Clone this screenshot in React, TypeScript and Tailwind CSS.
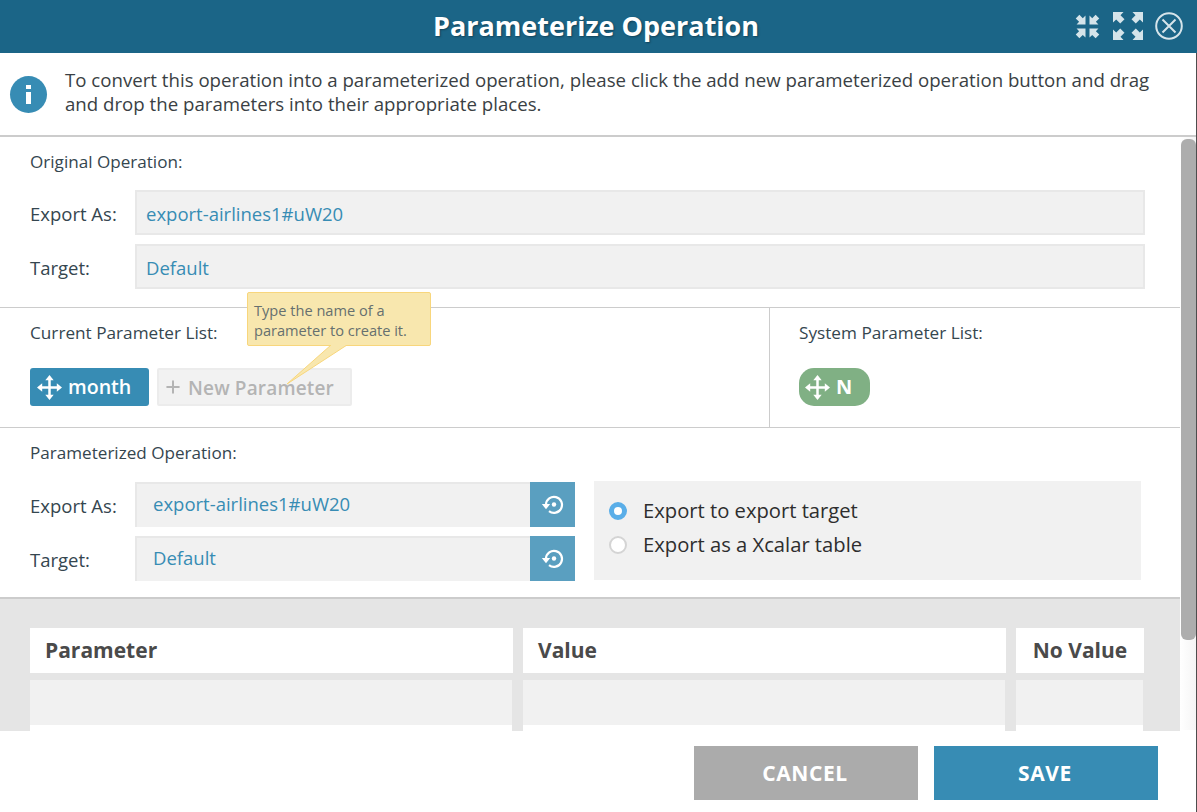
import * as React from "react";
import { Plus } from "lucide-react";

const ARROW = "M0 0h10.5L7.5 3.2l4 4-4.3 4.3-4-4L0 10.5z";

function HeaderIcons() {
  return (
    <div className="absolute left-[1075px] top-[12px] flex items-center text-[#d5e4ea]">
      {/* collapse */}
      <svg width="25" height="25" viewBox="0 0 25 25" fill="currentColor">
        <path d={ARROW} transform="translate(10.5 10.5) rotate(180) scale(0.85)" />
        <path d={ARROW} transform="translate(14.5 10.5) scale(1 -1) scale(0.85)" />
        <path d={ARROW} transform="translate(10.5 14.5) scale(-1 1) scale(0.85)" />
        <path d={ARROW} transform="translate(14.5 14.5) scale(0.85)" />
      </svg>
      {/* expand */}
      <svg className="ml-[13px]" width="30" height="28" viewBox="0 0 30 28" fill="currentColor">
        <path d={ARROW} />
        <path d={ARROW} transform="translate(30 0) scale(-1 1)" />
        <path d={ARROW} transform="translate(0 28) scale(1 -1)" />
        <path d={ARROW} transform="translate(30 28) scale(-1 -1)" />
      </svg>
      <svg className="ml-[12px]" width="28" height="28" viewBox="0 0 28 28" fill="none" stroke="currentColor" strokeWidth="2">
        <circle cx="14" cy="14" r="12.8" />
        <path d="M7.5 7.5l13 13M20.5 7.5l-13 13" />
      </svg>
    </div>
  );
}

function MoveIcon({ size }: { size: number }) {
  return (
    <svg width={size} height={size} viewBox="0 0 24 24" fill="currentColor" className="shrink-0">
      <path d="M10.8 4h2.4v16h-2.4z" />
      <path d="M4 10.8h16v2.4H4z" />
      <path d="M12 0l4 5H8z" />
      <path d="M12 24l4-5H8z" />
      <path d="M0 12l5-4v8z" />
      <path d="M24 12l-5-4v8z" />
    </svg>
  );
}

function ResetIcon() {
  return (
    <svg width="24" height="24" viewBox="0 0 24 24" fill="none" stroke="currentColor" strokeWidth="2.2">
      <path d="M5 11.5a8 8 0 1 1 3 6.6" />
      <path d="M0.8 11h8.4L5 16.2z" fill="currentColor" stroke="none" />
      <circle cx="13" cy="11.5" r="2.2" fill="currentColor" stroke="none" />
    </svg>
  );
}

function ReadOnlyRow({ label, value }: { label: string; value: string }) {
  return (
    <div className="flex items-center">
      <span className="w-[105px] pt-[2px] text-[18.5px] text-[#35464f]">{label}</span>
      <div className="flex h-[45px] w-[1010px] items-center border-2 border-[#e8e8e8] bg-[#f1f1f1] pl-[9px] pt-[2px] text-[18.5px] text-[#378cb4]">
        {value}
      </div>
    </div>
  );
}

function EditRow({ label, value }: { label: string; value: string }) {
  return (
    <div className="flex items-center">
      <span className="w-[105px] pt-[2px] text-[18.5px] text-[#35464f]">{label}</span>
      <div className="flex h-[45px] w-[395px] items-center border-t-2 border-l-2 border-[#e8e8e8] bg-[#f1f1f1] pb-[3px] pl-[16px] text-[18.5px] text-[#378cb4]">
        {value}
      </div>
      <div className="flex h-[45px] w-[45px] items-center justify-center bg-[#5a9fc0] text-white">
        <ResetIcon />
      </div>
    </div>
  );
}

function Radio({ checked, label }: { checked?: boolean; label: string }) {
  return (
    <div className="flex h-[34px] items-center gap-[16px]">
      {checked ? (
        <span className="h-[18px] w-[18px] rounded-full border-[5px] border-[#5aaee8] bg-white" />
      ) : (
        <span className="h-[18px] w-[18px] rounded-full border-2 border-[#d4d4d4] bg-white" />
      )}
      <span className="-mt-[2px] text-[20.2px] text-[#2e2e2e]">{label}</span>
    </div>
  );
}

function TableColumn({ title, width, center }: { title: string; width: string; center?: boolean }) {
  return (
    <div className={`flex flex-col ${width}`}>
      <div
        className={`flex h-[45px] items-center bg-white text-[21px] font-bold text-[#4a4a4a] ${
          center ? "justify-center" : "pl-[15px]"
        }`}
      >
        {title}
      </div>
      <div className="mt-[7px] h-[45px] w-[calc(100%-1px)] bg-[#f1f1f1]" />
      <div className="h-[6px] w-[calc(100%-1px)] bg-white" />
    </div>
  );
}

export default function App() {
  return (
    <div
      className="relative flex h-[812px] w-[1197px] flex-col overflow-hidden bg-white"
      style={{ fontFamily: '"Open Sans", sans-serif' }}
    >
      {/* Title bar */}
      <header className="relative flex h-[53px] shrink-0 items-center justify-center bg-[#1b6587] pr-[5px]">
        <h1 className="text-[27px] font-bold text-white [text-shadow:1px_1px_2px_rgba(0,0,0,0.35)]">
          Parameterize Operation
        </h1>
        <HeaderIcons />
      </header>

      {/* Instructions */}
      <div className="flex h-[84px] shrink-0 items-start border-b-2 border-[#cccccc] pl-[10px] pt-[15px]">
        <div className="mt-[8px] flex h-[37px] w-[37px] shrink-0 items-center justify-center rounded-full bg-[#378cb4] text-white">
          <span className="flex flex-col items-center">
            <span className="h-[4px] w-[5px] bg-white" />
            <span className="mt-[3px] h-[12px] w-[5px] bg-white" />
          </span>
        </div>
        <p className="ml-[18px] w-[1100px] text-[18.67px] leading-[24px] text-[#3a3f44]">
          To convert this operation into a parameterized operation, please click the add new parameterized operation
          button and drag and drop the parameters into their appropriate places.
        </p>
      </div>

      <div className="flex min-h-0 flex-1">
        {/* Scrolling content */}
        <div className="min-w-0 flex-1 overflow-hidden">
          <section className="h-[171px] border-b border-[#cccccc] pl-[30px] pt-[14px]">
            <div className="text-[17.1px] leading-[22px] text-[#35464f]">Original Operation:</div>
            <div className="mt-[17px] flex flex-col gap-[9px]">
              <ReadOnlyRow label="Export As:" value="export-airlines1#uW20" />
              <ReadOnlyRow label="Target:" value="Default" />
            </div>
          </section>

          <section className="relative flex h-[120px] border-b border-[#cccccc]">
            <div className="w-[770px] border-r border-[#cccccc] pl-[30px] pt-[14px]">
              <div className="text-[17.2px] leading-[22px] text-[#35464f]">Current Parameter List:</div>
              <div className="mt-[24px] flex items-center gap-[8px]">
                <div className="flex h-[38px] w-[119px] items-center gap-[6px] rounded-[3px] bg-[#378cb4] pl-[7px] text-[19.6px] font-semibold text-white">
                  <MoveIcon size={25} />
                  month
                </div>
                <div className="flex h-[38px] w-[195px] items-center gap-[5px] rounded-[2px] border-2 border-[#ececec] bg-[#f2f2f2] pl-[4px] pt-[3px] text-[19px] font-semibold tracking-[0.15px] text-[#b4b4b4]">
                  <Plus size={20} strokeWidth={2.4} className="-mt-[3px]" />
                  New Parameter
                </div>
              </div>
            </div>
            <div className="pl-[29px] pt-[14px]">
              <div className="text-[17.2px] leading-[22px] text-[#35464f]">System Parameter List:</div>
              <div className="mt-[24px] flex h-[38px] w-[71px] items-center gap-[6px] rounded-[15px] bg-[#80b084] pl-[6px] text-[20px] font-bold text-white">
                <MoveIcon size={25} />N
              </div>
            </div>

            {/* Tooltip */}
            <div className="absolute left-[247px] top-[-16px] h-[54px] w-[184px] rounded-[2px] border border-[#f8d67c] bg-[#f8e7ae] pl-[6px] pt-[7px] text-[14.6px] leading-[20px] text-[#66706f]">
              Type the name of a parameter to create it.
            </div>
            <svg className="absolute left-[285px] top-[37px]" width="64" height="42" viewBox="0 0 64 42">
              <path d="M46 0L2 39 62 0z" fill="#f8e7ae" />
              <path d="M46 0L2 39 62 0" fill="none" stroke="#f8d67c" strokeWidth="1" />
            </svg>
          </section>

          <section className="flex h-[171px] flex-col border-b-2 border-[#cccccc] pl-[30px] pt-[14px]">
            <div className="text-[17.1px] leading-[22px] text-[#35464f]">Parameterized Operation:</div>
            <div className="mt-[18px] flex">
              <div className="flex flex-col gap-[9px]">
                <EditRow label="Export As:" value="export-airlines1#uW20" />
                <EditRow label="Target:" value="Default" />
              </div>
              <div className="ml-[19px] mt-[-1px] flex h-[99px] w-[547px] flex-col bg-[#f1f1f1] pl-[15px] pt-[13px]">
                <Radio checked label="Export to export target" />
                <Radio label="Export as a Xcalar table" />
              </div>
            </div>
          </section>

          <section className="flex h-[132px] gap-[10px] overflow-hidden bg-[#e5e5e5] pl-[30px] pt-[29px]">
            <TableColumn title="Parameter" width="w-[483px]" />
            <TableColumn title="Value" width="w-[483px]" />
            <TableColumn title="No Value" width="w-[128px]" center />
          </section>
        </div>

        {/* Scrollbar */}
        <div className="h-[593px] w-[17px] shrink-0 bg-gradient-to-r from-[#ffffff] to-[#f4f4f4] pl-[1px] pr-[1px]">
          <div className="mt-[2px] h-[501px] w-[15px] rounded-[6px] bg-[#adadad]" />
        </div>
      </div>

      {/* Footer */}
      <footer className="absolute bottom-0 left-0 right-[1px] flex h-[81px] items-start justify-end gap-[16px] bg-white pr-[38px] pt-[15px]">
        <button className="h-[54px] w-[224px] bg-[#ababab] pr-[2px] pt-[1px] text-[21px] font-bold tracking-[0.6px] text-white">
          CANCEL
        </button>
        <button className="h-[54px] w-[224px] bg-[#378cb4] pr-[2px] pt-[1px] text-[21px] font-bold tracking-[0.6px] text-white">
          SAVE
        </button>
      </footer>
      <div className="pointer-events-none absolute bottom-0 right-0 top-[53px] w-[1px] bg-[#4d4d4d]" />
    </div>
  );
}
